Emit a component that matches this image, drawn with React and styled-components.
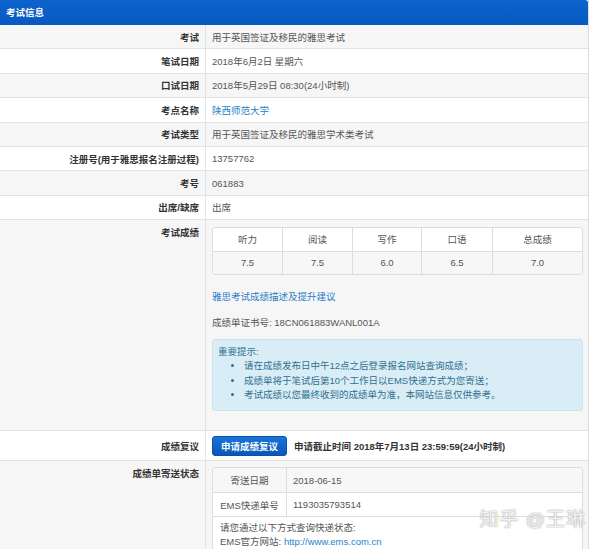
import styled, { createGlobalStyle } from "styled-components"

const GlobalStyle = createGlobalStyle`
    body {
        margin: 0;
        background: #fff;
        font-family: "Liberation Sans", "Noto Sans CJK SC", sans-serif;
        font-size: 9.5px;
        color: #555;
    }
`

const info = [
    { label: "考试", value: "用于英国签证及移民的雅思考试" },
    { label: "笔试日期", value: "2018年6月2日 星期六" },
    { label: "口试日期", value: "2018年5月29日 08:30(24小时制)" },
    { label: "考点名称", value: "陕西师范大学", link: true },
    { label: "考试类型", value: "用于英国签证及移民的雅思学术类考试" },
    { label: "注册号(用于雅思报名注册过程)", value: "13757762" },
    { label: "考号", value: "061883" },
    { label: "出席/缺席", value: "出席" },
]

const scores = [
    { name: "听力", score: "7.5" },
    { name: "阅读", score: "7.5" },
    { name: "写作", score: "6.0" },
    { name: "口语", score: "6.5" },
    { name: "总成绩", score: "7.0" },
]

const tips = [
    "请在成绩发布日中午12点之后登录报名网站查询成绩；",
    "成绩单将于笔试后第10个工作日以EMS快递方式为您寄送；",
    "考试成绩以您最终收到的成绩单为准，本网站信息仅供参考。",
]

const App = () => {
    return (
        <>
            <GlobalStyle />
            <Panel>
                <Header>考试信息</Header>
                {info.map((row, i) => (
                    <Row key={row.label} $alt={i % 2 === 0}>
                        <Label>{row.label}</Label>
                        <Value>{row.link ? <Link>{row.value}</Link> : row.value}</Value>
                    </Row>
                ))}
                <Row $alt $tall>
                    <Label $top>考试成绩</Label>
                    <Cell>
                        <ScoreTable>
                            {scores.map(s => <ScoreHead key={s.name}>{s.name}</ScoreHead>)}
                            {scores.map(s => <ScoreValue key={s.name}>{s.score}</ScoreValue>)}
                        </ScoreTable>
                        <AdviceLink>雅思考试成绩描述及提升建议</AdviceLink>
                        <CertNo>成绩单证书号: 18CN061883WANL001A</CertNo>
                        <Alert>
                            <div>重要提示:</div>
                            <TipList>
                                {tips.map(t => <li key={t}>{t}</li>)}
                            </TipList>
                        </Alert>
                    </Cell>
                </Row>
                <Row $tall>
                    <Label $top $pad={8}>成绩复议</Label>
                    <ReviewCell>
                        <Button>申请成绩复议</Button>
                        <Deadline>申请截止时间 2018年7月13日 23:59:59(24小时制)</Deadline>
                    </ReviewCell>
                </Row>
                <Row $alt $tall>
                    <Label $top>成绩单寄送状态</Label>
                    <ShipCell>
                        <ShipBox>
                            <ShipRow $alt>
                                <ShipKey>寄送日期</ShipKey>
                                <ShipVal>2018-06-15</ShipVal>
                            </ShipRow>
                            <ShipRow>
                                <ShipKey>EMS快递单号</ShipKey>
                                <ShipVal>1193035793514</ShipVal>
                            </ShipRow>
                            <ShipNote>
                                <div>请您通过以下方式查询快递状态:</div>
                                <div>EMS官方网站: <Link>http://www.ems.com.cn</Link></div>
                            </ShipNote>
                        </ShipBox>
                    </ShipCell>
                </Row>
                <Watermark>知乎 @王琳</Watermark>
            </Panel>
        </>
    )
}
export default App

const Panel = styled.div`
    position: relative;
    width: 589px;
    height: 549px;
    overflow: hidden;
    border-right: 1px solid #ddd;
    box-sizing: border-box;
`

const Header = styled.div`
    height: 25px;
    line-height: 25px;
    padding-left: 6px;
    background: linear-gradient(#0d63cc, #0759c0);
    border-top-right-radius: 3px;
    color: #fff;
    font-weight: bold;
    font-size: 9.5px;
`

const Row = styled.div`
    display: grid;
    grid-template-columns: 206px 1fr;
    min-height: 24.4px;
    box-sizing: border-box;
    border-bottom: 1px solid #e3e3e3;
    background: ${p => (p.$alt ? "#f6f6f6" : "#fff")};
    align-items: ${p => (p.$tall ? "stretch" : "center")};
`

const Label = styled.div`
    align-self: stretch;
    display: flex;
    justify-content: flex-end;
    align-items: ${p => (p.$top ? "flex-start" : "center")};
    padding: ${p => (p.$top ? `${p.$pad || 5}px` : "0")} 6px 0 0;
    border-right: 1px solid #e3e3e3;
    font-weight: bold;
    color: #333;
`

const Value = styled.div`
    padding-left: 6px;
`

const Link = styled.span`
    color: #2a7fc6;
`

const Cell = styled.div`
    padding: 7px 5px 19px 6px;
`

const ScoreTable = styled.div`
    display: grid;
    grid-template-columns: 70px 70px 69px 71px 1fr;
    border: 1px solid #ddd;
    border-radius: 3px;
    overflow: hidden;
`

const ScoreHead = styled.div`
    height: 23px;
    line-height: 23px;
    text-align: center;
    background: #fff;
    border-right: 1px solid #ddd;
    border-bottom: 1px solid #ddd;
    &:nth-child(5) { border-right: 0; }
`

const ScoreValue = styled.div`
    height: 22px;
    line-height: 22px;
    text-align: center;
    background: #f7f7f7;
    border-right: 1px solid #ddd;
    &:last-child { border-right: 0; }
`

const AdviceLink = styled.div`
    margin-top: 14px;
    color: #2a7fc6;
`

const CertNo = styled.div`
    margin-top: 12px;
`

const Alert = styled.div`
    margin-top: 10px;
    padding: 5px 5px 8px 5px;
    background: #d9edf7;
    border: 1px solid #c7e6f2;
    border-radius: 3px;
    color: #31708f;
    line-height: 14.3px;
`

const TipList = styled.ul`
    margin: 0;
    padding-left: 26px;
    li { padding-left: 0; }
`

const ReviewCell = styled.div`
    display: flex;
    align-items: center;
    gap: 7px;
    padding: 5px 6px 4px;
`

const Button = styled.button`
    height: 20px;
    padding: 0 8px;
    border: 1px solid #0a4fa8;
    border-radius: 3px;
    background: linear-gradient(#1a74d8, #0857b8);
    color: #fff;
    font: bold 9.5px "Liberation Sans", "Noto Sans CJK SC", sans-serif;
`

const Deadline = styled.span`
    font-weight: bold;
    color: #333;
`

const ShipCell = styled.div`
    padding: 6px 5px 0 6px;
`

const ShipBox = styled.div`
    border: 1px solid #ddd;
    border-bottom: 0;
    border-radius: 3px 3px 0 0;
    background: #fff;
    height: 100px;
`

const ShipRow = styled.div`
    display: grid;
    grid-template-columns: 74px 1fr;
    height: 24.5px;
    border-bottom: 1px solid #ddd;
    background: ${p => (p.$alt ? "#f7f7f7" : "#fff")};
    box-sizing: border-box;
`

const ShipKey = styled.div`
    display: flex;
    align-items: center;
    justify-content: center;
    border-right: 1px solid #ddd;
`

const ShipVal = styled.div`
    display: flex;
    align-items: center;
    padding-left: 6px;
`

const ShipNote = styled.div`
    padding: 4px 7px;
    line-height: 14px;
`

const Watermark = styled.div`
    position: absolute;
    right: 2px;
    bottom: 18px;
    font-size: 19px;
    letter-spacing: 1px;
    color: rgba(255, 255, 255, 0.9);
    text-shadow: 0 0 1px #999, 0 0 2px #bbb;
`
